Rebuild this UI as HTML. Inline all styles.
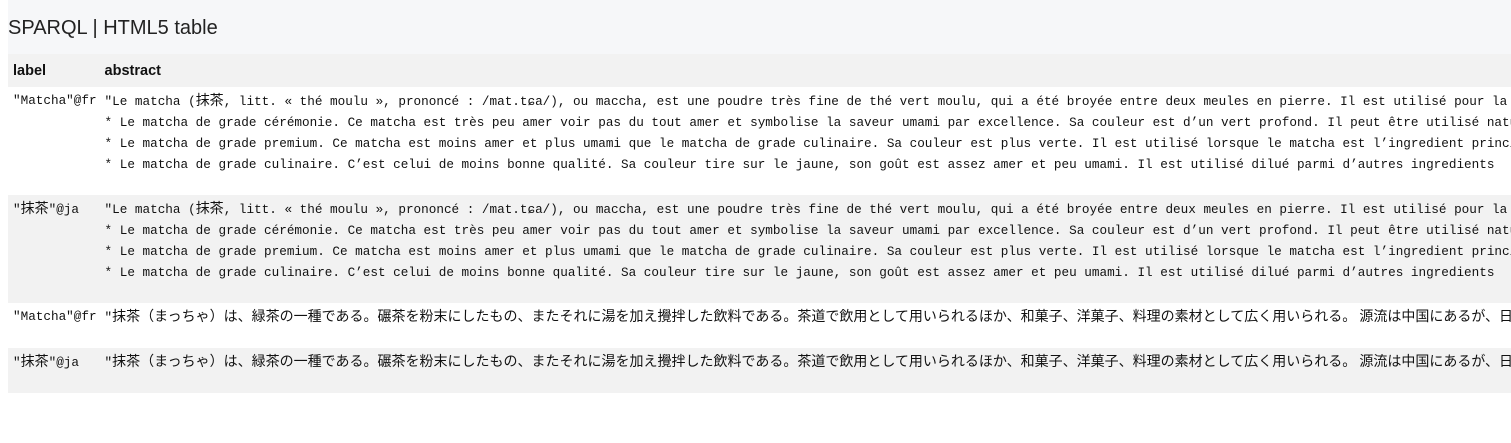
<!DOCTYPE html>
<html><head><meta charset="utf-8">
<style>
html,body{margin:0;padding:0;background:#fff;width:1511px;height:443px;overflow:hidden}
.title{position:absolute;left:8px;top:0;width:1503px;height:54px;background:#f6f7f9;font-family:"Segoe UI","Liberation Sans",sans-serif;font-size:20px;color:#222;line-height:56px;box-sizing:border-box;padding-left:0}
table{position:absolute;left:8px;top:54px;border-collapse:collapse;white-space:nowrap}
th{font-family:"Liberation Sans",sans-serif;font-weight:bold;font-size:14.5px;text-align:left;height:33px;padding:0 5px;background:#f2f2f2;color:#111}
td{font-family:"Liberation Mono","Noto Sans CJK JP",monospace;font-size:12.67px;line-height:21px;vertical-align:top;padding:3px 5px 20px 5px;white-space:pre;color:#111}
td:first-child,th:first-child{padding-right:3px}
tr.g td{background:#f2f2f2}
.j{font-family:"Noto Sans CJK JP",sans-serif;font-size:14px;letter-spacing:0;line-height:20px}
</style></head><body>
<div class="title">SPARQL | HTML5 table</div>
<table>
<tr><th style="width:84px">label</th><th style="width:1500px">abstract</th></tr>
<tr><td>"Matcha"@fr</td><td>"Le matcha (<span class="j">抹茶</span>, litt. « thé moulu », prononcé : /mat.tɕa/), ou maccha, est une poudre très fine de thé vert moulu, qui a été broyée entre deux meules en pierre. Il est utilisé pour la cérémonie
* Le matcha de grade cérémonie. Ce matcha est très peu amer voir pas du tout amer et symbolise la saveur umami par excellence. Sa couleur est d’un vert profond. Il peut être utilisé nature
* Le matcha de grade premium. Ce matcha est moins amer et plus umami que le matcha de grade culinaire. Sa couleur est plus verte. Il est utilisé lorsque le matcha est l’ingredient principal
* Le matcha de grade culinaire. C’est celui de moins bonne qualité. Sa couleur tire sur le jaune, son goût est assez amer et peu umami. Il est utilisé dilué parmi d’autres ingredients</td></tr>
<tr class="g"><td>"<span class="j">抹茶</span>"@ja</td><td>"Le matcha (<span class="j">抹茶</span>, litt. « thé moulu », prononcé : /mat.tɕa/), ou maccha, est une poudre très fine de thé vert moulu, qui a été broyée entre deux meules en pierre. Il est utilisé pour la cérémonie
* Le matcha de grade cérémonie. Ce matcha est très peu amer voir pas du tout amer et symbolise la saveur umami par excellence. Sa couleur est d’un vert profond. Il peut être utilisé nature
* Le matcha de grade premium. Ce matcha est moins amer et plus umami que le matcha de grade culinaire. Sa couleur est plus verte. Il est utilisé lorsque le matcha est l’ingredient principal
* Le matcha de grade culinaire. C’est celui de moins bonne qualité. Sa couleur tire sur le jaune, son goût est assez amer et peu umami. Il est utilisé dilué parmi d’autres ingredients</td></tr>
<tr><td>"Matcha"@fr</td><td>"<span class="j">抹茶（まっちゃ）は、緑茶の一種である。碾茶を粉末にしたもの、またそれに湯を加え攪拌した飲料である。茶道で飲用として用いられるほか、和菓子、洋菓子、料理の素材として広く用いられる。 源流は中国にあるが、日本</span></td></tr>
<tr class="g"><td>"<span class="j">抹茶</span>"@ja</td><td>"<span class="j">抹茶（まっちゃ）は、緑茶の一種である。碾茶を粉末にしたもの、またそれに湯を加え攪拌した飲料である。茶道で飲用として用いられるほか、和菓子、洋菓子、料理の素材として広く用いられる。 源流は中国にあるが、日本</span></td></tr>
</table>
</body></html>
